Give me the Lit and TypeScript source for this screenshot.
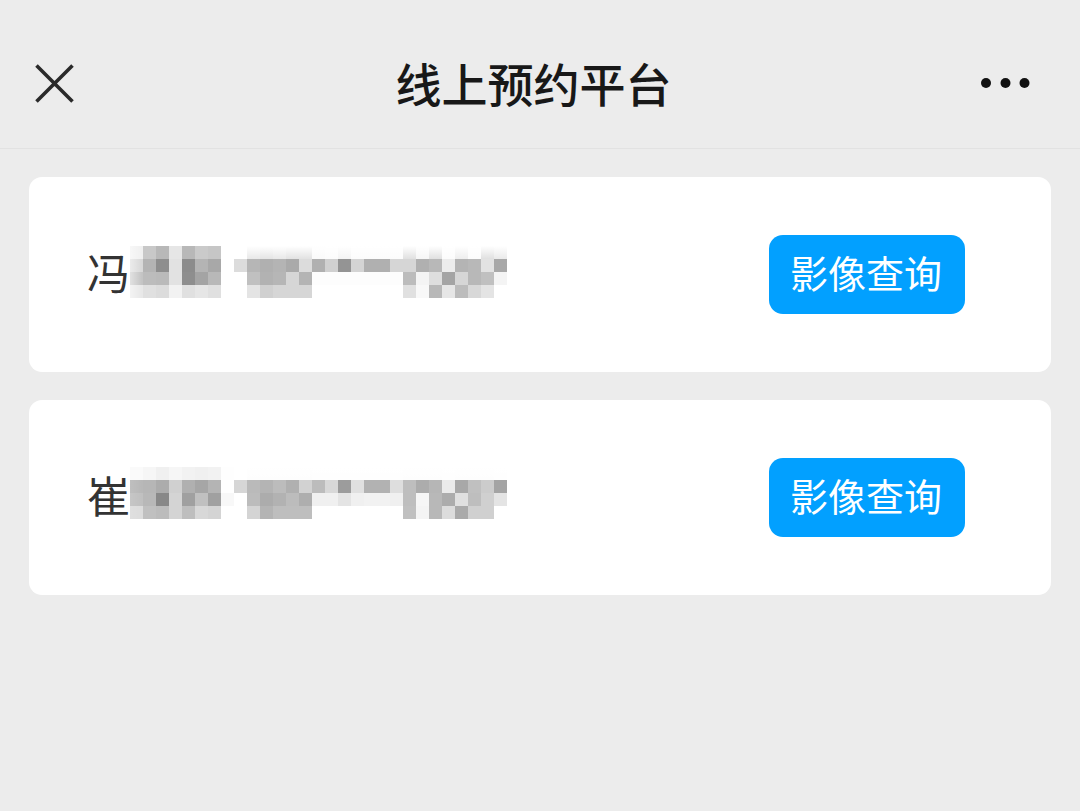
import { LitElement, html, css, svg } from "lit";
import { customElement, property } from "lit/decorators.js";

interface Patient {
  surname: string;
  // Vertical start of the mosaic inside its box.
  shift: number;
  // Strength of the white fade at the left edge.
  fade: number;
  // One string per mosaic row, two hex digits of grey per cell.
  mosaic: string[];
}

const CELL = 13;

const patients: Patient[] = [
  {
    surname: "冯",
    shift: 1,
    fade: 0.5,
    mosaic: [
      "f0 c8 b8 e6 b8 ca c6 ff ff e8 e4 e8 e2 e2 fa fc f4 fc fc fc fc e0 f6 e0 fc ee fc e0 ea",
      "d8 b4 8e e2 8c b4 a8 ff dc b6 b0 b4 aa dc b0 d0 94 d4 b0 b0 d6 d6 b0 b8 ec b4 b8 e2 a8",
      "c4 bc ba e2 8e a4 b8 ff ff c0 b2 b6 d6 b4 fd fd fd fd fd fd fd bc f4 de a4 d6 b8 c0 f4",
      "e8 e0 dc f2 e0 e6 e0 ff ff e4 d0 d6 d6 d6 ff ff ff ff ff ff ff e0 f8 b8 e6 bc d8 e4 ff",
    ],
  },
  {
    surname: "崔",
    shift: -1,
    fade: 0.1,
    mosaic: [
      "fa f6 f0 f6 f2 f0 f2 fe ff fd fd fd fd fd fe fe fe fe fe fe fe fd fd fd fe fd fd fd fe",
      "b8 b6 ac d0 b0 a6 b4 ff d6 ba b4 bc b0 d2 bc d8 9c e0 b2 b2 de be ac b6 ea a8 c0 cc a4",
      "c0 b8 88 d4 a0 c0 a0 f8 ff bc ac b2 bc ae f0 f0 e4 f0 f2 f2 f0 be f6 b8 ac e0 be d0 e4",
      "dc c0 bc d4 be d8 d4 ff ff d4 b4 be be be ff ff ff ff ff ff ff c0 f4 b8 dc aa d0 d0 ff",
    ],
  },
];

@customElement("masked-text")
export class MaskedText extends LitElement {
  static styles = css`
    :host {
      display: block;
      flex: none;
    }
    .mosaic {
      display: block;
      overflow: visible;
    }
  `;

  @property({ attribute: false }) rows: string[] = [];
  @property({ type: Number }) shift = 0;
  @property({ type: Number }) fade = 0;

  render() {
    const cells = this.rows.flatMap((row, y) =>
      row.split(" ").map(
        (grey, x) => svg`<rect x=${x * CELL} y=${y * CELL + this.shift}
          width=${CELL} height=${CELL} fill=${"#" + grey + grey + grey}></rect>`
      )
    );
    return html`
      <svg class="mosaic" width="377" height="59" viewBox="0 0 377 59" aria-hidden="true">
        <defs>
          <linearGradient id="down" x1="0" y1="0" x2="0" y2="1">
            <stop offset="0" stop-color="#fff"></stop>
            <stop offset="1" stop-color="#fff" stop-opacity="0"></stop>
          </linearGradient>
          <linearGradient id="across" x1="0" y1="0" x2="1" y2="0">
            <stop offset="0" stop-color="#fff" stop-opacity=${this.fade}></stop>
            <stop offset="1" stop-color="#fff" stop-opacity="0"></stop>
          </linearGradient>
        </defs>
        <g shape-rendering="crispEdges">${cells}</g>
        <rect x="104" y=${this.shift} width="273" height="13" fill="url(#down)"></rect>
        <rect x="0" y=${this.shift} width="12" height="52" fill="url(#across)"></rect>
      </svg>
    `;
  }
}

@customElement("app-root")
export class AppRoot extends LitElement {
  static styles = css`
    :host {
      display: block;
      box-sizing: border-box;
      min-height: 100vh;
      background: #ececec;
      color: #333;
      font-family: "Noto Sans CJK SC", "Noto Sans", sans-serif;
    }
    .bar {
      display: grid;
      grid-template-columns: 1fr auto 1fr;
      align-items: center;
      box-sizing: border-box;
      height: 149px;
      padding: 18px 50px 0 35px;
      border-bottom: 1px solid #e2e2e2;
    }
    .title {
      margin: 0;
      padding: 0 0 2px 2px;
      color: #181818;
      font-size: 46px;
      font-weight: 500;
      line-height: 64px;
      white-space: nowrap;
    }
    .icon {
      display: block;
      padding: 0;
      border: 0;
      background: none;
      cursor: pointer;
    }
    .icon svg {
      display: block;
    }
    .more {
      justify-self: end;
    }
    .list {
      display: flex;
      flex-direction: column;
      gap: 28px;
      margin: 0;
      padding: 28px 29px;
      list-style: none;
    }
    .card {
      display: flex;
      align-items: center;
      justify-content: space-between;
      padding: 58px 86px 58px 58px;
      border-radius: 13px;
      background: #fff;
    }
    .person {
      display: flex;
      align-items: center;
      font-size: 43px;
      line-height: 53px;
    }
    .surname {
      padding-bottom: 6px;
    }
    .query {
      height: 79px;
      padding: 0 23px 5px 21px;
      border: 0;
      border-radius: 14px;
      background: #02a0ff;
      color: #fff;
      font-family: inherit;
      font-size: 38px;
      line-height: 56px;
      white-space: nowrap;
      cursor: pointer;
    }
  `;

  render() {
    return html`
      <header class="bar">
        <button class="icon" type="button" aria-label="关闭">
          <svg width="39" height="39" viewBox="0 0 39 39" fill="none" stroke="#2a2a2a" stroke-width="3.6">
            <path d="M1.5 1.5 L37.5 37.5 M37.5 1.5 L1.5 37.5"></path>
          </svg>
        </button>
        <h1 class="title">线上预约平台</h1>
        <button class="icon more" type="button" aria-label="更多">
          <svg width="49" height="10" viewBox="0 0 49 10" fill="#111">
            <circle cx="5" cy="5" r="5"></circle>
            <circle cx="24.5" cy="5" r="5"></circle>
            <circle cx="43.5" cy="5" r="5"></circle>
          </svg>
        </button>
      </header>
      <ul class="list">
        ${patients.map(
          (p) => html`
            <li class="card">
              <div class="person">
                <span class="surname">${p.surname}</span>
                <masked-text .rows=${p.mosaic} .shift=${p.shift} .fade=${p.fade}></masked-text>
              </div>
              <button class="query" type="button">影像查询</button>
            </li>
          `
        )}
      </ul>
    `;
  }
}
